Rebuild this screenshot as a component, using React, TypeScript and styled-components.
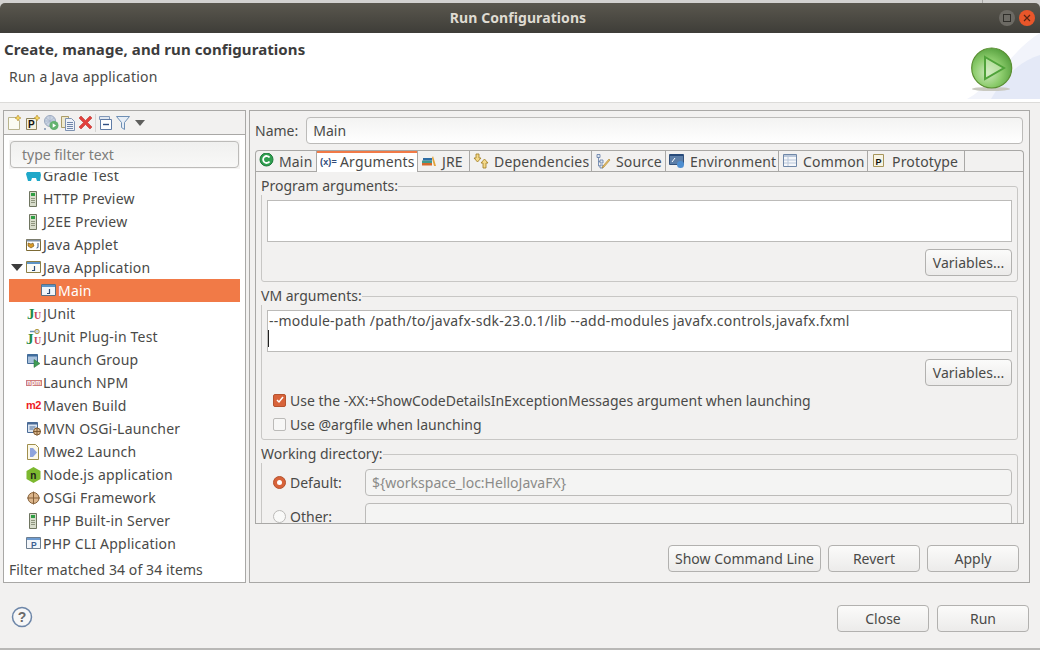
import React from "react";
import styled, { createGlobalStyle } from "styled-components";

const colors = {
  text: "#4a4a48",
  border: "#a9a8a6",
  groupLine: "#c8c7c5",
  field: "#bcbbb9",
  face: "#f2f1f0",
  orange: "#f17a47",
};

const GlobalStyle = createGlobalStyle`
  html, body {
    margin: 0;
    padding: 0;
    background: ${colors.face};
  }
  * {
    box-sizing: border-box;
  }
  body {
    font-family: "Noto Sans", sans-serif;
    font-size: 14px;
    color: ${colors.text};
  }
`;

const Window = styled.div`
  width: 1040px;
  height: 650px;
  display: flex;
  flex-direction: column;
  overflow: hidden;
  background: linear-gradient(#d3d2d0 8px, ${colors.face} 8px);
  border-bottom: 2px solid #b9b8b6;
`;

const TopEdge = styled.div`
  flex: 0 0 3px;
  background: linear-gradient(
    90deg,
    #d3d2d0 982px,
    #a8a7a5 982px,
    #a8a7a5 983px,
    #d3d2d0 983px
  );
`;

const TitleBar = styled.div`
  position: relative;
  flex: 0 0 30px;
  display: flex;
  align-items: center;
  justify-content: center;
  padding: 0 4px 2px 0;
  border-radius: 5px 5px 0 0;
  background: linear-gradient(#5a574e, #3e3d38);
  color: #dfdbd2;
  font-size: 14px;
  font-weight: 700;
  letter-spacing: 0.08px;
`;

const WindowButtons = styled.div`
  position: absolute;
  right: 5px;
  top: 7px;
  display: flex;
  gap: 4px;
`;

const WindowButton = styled.span<{ $close?: boolean }>`
  width: 16px;
  height: 16px;
  border-radius: 50%;
  display: flex;
  align-items: center;
  justify-content: center;
  background: ${(p) => (p.$close ? "#e9562a" : "#6c6a64")};
`;

const Banner = styled.div`
  flex: 0 0 70px;
  display: flex;
  justify-content: space-between;
  align-items: flex-start;
  background: #fff;
  border-bottom: 1px solid #dcdbd9;
`;

const BannerText = styled.div`
  display: flex;
  flex-direction: column;
`;

const BannerTitle = styled.div`
  margin: 7px 0 0 4px;
  font-size: 15px;
  font-weight: 700;
  line-height: 19px;
  letter-spacing: 0.08px;
  color: #3c3c3c;
`;

const BannerSub = styled.div`
  margin: 8px 0 0 9px;
  font-size: 14px;
  line-height: 19px;
  letter-spacing: 0.2px;
`;

const Body = styled.div`
  flex: 0 0 473px;
  margin-top: 7px;
  display: flex;
  gap: 3px;
  padding: 0 10px 0 3px;
`;

const LeftPanel = styled.div`
  width: 243px;
  display: flex;
  flex-direction: column;
  background: #fff;
  border: 1px solid ${colors.border};
`;

const Toolbar = styled.div`
  flex: 0 0 24px;
  display: flex;
  align-items: center;
  padding-left: 3px;
  gap: 2px;
  background: ${colors.face};
  border-bottom: 1px solid ${colors.border};
`;

const ToolDivider = styled.span`
  width: 1px;
  height: 18px;
  margin-left: -2px;
  background: #d6d5d3;
`;

const DropArrow = styled.span`
  width: 0;
  height: 0;
  margin-left: 1px;
  border-left: 5px solid transparent;
  border-right: 5px solid transparent;
  border-top: 6px solid #5f5f5d;
`;

const FilterWrap = styled.div`
  margin: 5px 5px 3px;
  padding: 1px;
  background: #f5f4f3;
`;

const FilterInput = styled.div`
  height: 27px;
  padding-left: 11px;
  display: flex;
  align-items: center;
  border: 1px solid ${colors.field};
  border-radius: 4px;
  background: linear-gradient(#f0f0ef, #f8f8f7);
  color: #7d7d7b;
`;

const TreeViewport = styled.div`
  flex: 1;
  overflow: hidden;
  padding: 0 5px;
`;

const TreeList = styled.div`
  margin-top: -8px;
  display: flex;
  flex-direction: column;
`;

const TreeRow = styled.div<{ $selected?: boolean; $child?: boolean }>`
  height: 23px;
  display: flex;
  align-items: center;
  gap: 1px;
  padding-left: ${(p) => (p.$child ? "32px" : "17px")};
  line-height: 23px;
  letter-spacing: 0.2px;
  white-space: nowrap;
  background: ${(p) => (p.$selected ? colors.orange : "transparent")};
  color: ${(p) => (p.$selected ? "#fff" : colors.text)};
`;

const Expander = styled.span`
  width: 0;
  height: 0;
  margin: 0 2px 0 -15px;
  border-left: 6px solid transparent;
  border-right: 6px solid transparent;
  border-top: 7px solid #3c3c3c;
`;

const StatusLine = styled.div`
  flex: 0 0 24px;
  padding-left: 5px;
  line-height: 24px;
  letter-spacing: 0.1px;
`;

const RightPanel = styled.div`
  flex: 1;
  display: flex;
  flex-direction: column;
  padding: 6px 5px 0 5px;
  border: 1px solid ${colors.border};
`;

const NameRow = styled.div`
  display: flex;
  align-items: center;
  gap: 8px;
  padding-right: 1px;
`;

const Label = styled.span`
  white-space: nowrap;
`;

const TextField = styled.div<{ $disabled?: boolean; $flush?: boolean }>`
  flex: 1;
  height: 27px;
  display: flex;
  align-items: center;
  padding-left: 6px;
  border: 1px solid ${colors.field};
  border-radius: ${(p) => (p.$flush ? "4px 4px 0 0" : "4px")};
  background: ${(p) =>
    p.$disabled ? "#f4f4f3" : "linear-gradient(#f3f3f2, #fff)"};
  color: ${(p) => (p.$disabled ? "#8b8b89" : colors.text)};
`;

const TabStrip = styled.div`
  margin-top: 6px;
  height: 21px;
  display: flex;
  border: 1px solid ${colors.border};
  border-bottom: none;
  border-radius: 4px 4px 0 0;
`;

const Tab = styled.div<{ $active?: boolean; $width: number; $gap: number }>`
  position: relative;
  width: ${(p) => p.$width}px;
  height: ${(p) => (p.$active ? "21px" : "20px")};
  display: flex;
  align-items: center;
  gap: ${(p) => p.$gap}px;
  padding-left: 3px;
  letter-spacing: 0.16px;
  white-space: nowrap;
  border-right: 1px solid ${colors.border};
  box-shadow: ${(p) => (p.$active ? `inset 0 2px ${colors.orange}` : "none")};
  background: ${(p) => (p.$active ? "#fff" : "transparent")};
`;

const TabPane = styled.div`
  height: 353px;
  overflow: hidden;
  padding: 5px 5px 0;
  display: flex;
  flex-direction: column;
  gap: 5px;
  border: 1px solid ${colors.border};
`;

const Group = styled.fieldset<{ $height: number }>`
  flex: 0 0 ${(p) => p.$height}px;
  margin: 0;
  padding: 5px 5px 0;
  min-width: 0;
  border: 1px solid ${colors.groupLine};
  border-radius: 0 3px 3px 3px;
`;

const GroupLegend = styled.legend`
  margin-left: -6px;
  padding: 0;
  line-height: 18px;
  height: 18px;
`;

const TextBlock = styled.div`
  height: 42px;
  padding: 1px 0 0 1px;
  border: 1px solid ${colors.field};
  background: #fff;
  line-height: 18px;
  letter-spacing: 0.22px;
  white-space: nowrap;
`;

const Caret = styled.div`
  width: 1px;
  height: 17px;
  margin-left: -1px;
  background: #222;
`;

const ButtonRow = styled.div<{ $gap?: number }>`
  display: flex;
  justify-content: flex-end;
  gap: ${(p) => p.$gap ?? 7}px;
`;

const GroupButtons = styled(ButtonRow)`
  margin-top: 7px;
`;

const Button = styled.div<{ $width: number }>`
  width: ${(p) => p.$width}px;
  height: 27px;
  padding-bottom: 1px;
  display: flex;
  align-items: center;
  justify-content: center;
  border: 1px solid #b2b1af;
  border-radius: 4px;
  background: linear-gradient(#fbfbfa, #ecebea);
  white-space: nowrap;
`;

const CheckRow = styled.div`
  height: 24px;
  display: flex;
  align-items: center;
  gap: 4px;
  padding-left: 6px;
  white-space: nowrap;
`;

const CheckList = styled.div`
  margin-top: 2px;
`;

const Check = styled.span<{ $on?: boolean }>`
  width: 13px;
  height: 13px;
  display: flex;
  align-items: center;
  justify-content: center;
  border-radius: 2px;
  border: 1px solid ${(p) => (p.$on ? "#b5532f" : "#bbbab8")};
  background: ${(p) => (p.$on ? "#d8633a" : "#f7f7f6")};
`;

const DirRow = styled.div<{ $top: number }>`
  margin-top: ${(p) => p.$top}px;
  display: flex;
  align-items: center;
  padding-left: 6px;
`;

const Radio = styled.span<{ $on?: boolean }>`
  width: 13px;
  height: 13px;
  margin-right: 4px;
  border-radius: 50%;
  display: flex;
  align-items: center;
  justify-content: center;
  border: 1px solid ${(p) => (p.$on ? "#b5532f" : "#bbbab8")};
  background: ${(p) => (p.$on ? "#d8633a" : "#f9f9f8")};
`;

const RadioDot = styled.span`
  width: 5px;
  height: 5px;
  border-radius: 50%;
  background: #fff;
`;

const DirLabel = styled.span`
  width: 75px;
`;

const PanelButtons = styled(ButtonRow)`
  margin: 21px 5px 0 0;
`;

const Footer = styled.div`
  flex: 1;
  display: flex;
  align-items: flex-start;
  justify-content: space-between;
  padding: 22px 11px 0 11px;
`;

const HelpSlot = styled.div`
  margin-top: 1px;
`;

const IconSvg = styled.svg`
  flex: none;
`;

const Svg: React.FC<{ children: React.ReactNode; w?: number; h?: number }> = ({
  children,
  w = 16,
  h = 16,
}) => (
  <IconSvg width={w} height={h} viewBox={`0 0 ${w} ${h}`}>
    {children}
  </IconSvg>
);

const Star = ({ x, y }: { x: number; y: number }) => (
  <path
    transform={`translate(${x} ${y})`}
    d="M3 0l1 2 2 1-2 1-1 2-1-2-2-1 2-1z"
    fill="#f6d65b"
    stroke="#b08a2e"
    strokeWidth=".6"
  />
);

const NewIcon = () => (
  <Svg>
    <path d="M1.500 2.500h8l3 3v9h-11z" fill="#fbfbf2" stroke="#b9b48e" />
    <Star x={8} y={0} />
  </Svg>
);

const ProtoIcon = () => (
  <Svg>
    <path d="M1.500 3.500h10v11h-10z" fill="#f5f1df" stroke="#8d835d" />
    <text x="3" y="13" fontSize="10" fontWeight="700" fontFamily="Liberation Sans" fill="#111">P</text>
    <Star x={9} y={0} />
  </Svg>
);

const ExportIcon = () => (
  <Svg>
    <circle cx="7" cy="6" r="5.500" fill="#c9d3e2" stroke="#9aa8bf" />
    <path d="M2 6h10M7 1v10M3 3l8 6M11 3l-8 6" stroke="#a5b2c7" strokeWidth=".7" />
    <circle cx="11" cy="10.500" r="4.500" fill="#63b26f" />
    <path d="M9.700 8.300l3.400 2.200-3.400 2.200z" fill="#fff" />
    <circle cx="2" cy="14" r="1" fill="#7f93b2" />
  </Svg>
);

const DuplicateIcon = () => (
  <Svg>
    <path d="M.5 1.500h7v11h-7z" fill="#efe9cf" stroke="#ab9d68" />
    <path d="M4.500 3.500h6l3 3v9h-9z" fill="#eef2f8" stroke="#7f93b2" />
    <path d="M6 7.500h6M6 9.500h6M6 11.500h6M6 13.500h6" stroke="#6f86aa" />
  </Svg>
);

const DeleteIcon = () => (
  <Svg>
    <path
      d="M0 3l2-2 4.500 4.500 4.500-4.500 2 2-4.500 4.500 4.500 4.500-2 2-4.500-4.500-4.500 4.500-2-2 4.500-4.500z"
      fill="#e2403c"
      stroke="#bb3a36"
      strokeWidth=".6"
    />
  </Svg>
);

const CollapseIcon = () => (
  <Svg>
    <path d="M1.500 1.500h10v3h-10z" fill="#dfe6f0" stroke="#8298b8" />
    <path d="M2.500 4.500h11v10h-11z" fill="#fff" stroke="#5f7ba6" />
    <path d="M5 9.500h6" stroke="#2f4f82" strokeWidth="1.400" />
  </Svg>
);

const FilterIcon = () => (
  <Svg>
    <path d="M.5 1.500h13l-5 6v7l-3-2v-5z" fill="#e6edf6" stroke="#6e8fb5" />
  </Svg>
);

const ServerIcon = () => (
  <Svg>
    <path d="M3.500 .5h7v15h-7z" fill="#d7dccb" stroke="#6f7560" />
    <path d="M5 2h4v3H5z" fill="#2f9e44" />
    <path d="M5 7.500h4M5 9.500h4M5 11.500h4" stroke="#8f957f" />
  </Svg>
);

const AppletIcon = () => (
  <Svg>
    <path d="M.5 2.500h14v11H.5z" fill="#fff" stroke="#7c6a35" />
    <path d="M.5 2.500h14v2H.5z" fill="#7d90a8" />
    <path d="M2 6l3 1 2-1 1 3-3 2-3-2z" fill="#d89a2a" stroke="#6d4f14" strokeWidth=".6" />
    <path d="M12 6v4.500l-1.500.5" stroke="#3a5a8a" fill="none" />
  </Svg>
);

const JavaAppIcon = ({ flat }: { flat?: boolean }) => (
  <Svg>
    <path d="M.5 1.500h14v11H.5z" fill={flat ? "#f0f5fa" : "#fbfbf6"} stroke={flat ? "#5c6f82" : "#8b7f47"} />
    <path d="M1 2h13v2H1z" fill="#5c93c6" />
    <path d="M8.500 6v4.500H6" stroke="#2c4b75" fill="none" strokeWidth="1.200" />
  </Svg>
);

const JUnitIcon = () => (
  <Svg>
    <text x="1" y="12.500" fontSize="15" fontWeight="700" fontFamily="Liberation Serif" fill="#1f8a48">J</text>
    <text x="8" y="12.500" fontSize="10" fontWeight="700" fontFamily="Liberation Serif" fill="#c8475b">U</text>
  </Svg>
);

const JUnitPluginIcon = () => (
  <Svg>
    <text x="0" y="14.500" fontSize="15" fontWeight="700" fontFamily="Liberation Serif" fill="#1f8a48">J</text>
    <text x="8" y="14.500" fontSize="10" fontWeight="700" fontFamily="Liberation Serif" fill="#c8475b">U</text>
    <path d="M4 2.500h5" stroke="#6e8fb5" strokeWidth="1.500" />
    <circle cx="11" cy="2.500" r="2.200" fill="#c7d4e6" stroke="#b49a3c" />
  </Svg>
);

const GroupIcon = () => (
  <Svg>
    <path d="M1.500 2.500h10v9h-10z" fill="#a7c0dc" stroke="#476c96" />
    <path d="M1.500 2.500h10v2h-10z" fill="#3f6d9e" />
    <path d="M8 7.500l6 4-6 4z" fill="#3f9c55" stroke="#2a6f3d" strokeWidth=".5" />
  </Svg>
);

const NpmIcon = () => (
  <Svg>
    <rect x="0" y="5" width="16" height="6" fill="#cf7d7d" />
    <text x="1" y="10" fontSize="6.500" fontWeight="700" fontFamily="Liberation Sans" fill="#fff">npm</text>
  </Svg>
);

const M2Icon = () => (
  <Svg>
    <text x="0" y="11" fontSize="11" fontWeight="700" fontFamily="Liberation Sans" fill="#ee1c25" letterSpacing="-.5">m2</text>
  </Svg>
);

const MvnIcon = () => (
  <Svg>
    <path d="M1.500 1.500h10v10h-10z" fill="#dbe5f1" stroke="#4a6b96" />
    <path d="M1.500 1.500h10v2h-10z" fill="#4a6b96" />
    <path d="M3.500 6h6M3.500 8h4" stroke="#4a6b96" />
    <circle cx="11" cy="10.500" r="3.500" fill="#d8b48a" stroke="#7d5a33" />
    <path d="M7 10.500h8M11 6.500v8" stroke="#7d5a33" />
  </Svg>
);

const MweIcon = () => (
  <Svg>
    <path d="M1.500 .5h8l3 3v12h-11z" fill="#fbf8ea" stroke="#a08f4c" />
    <path d="M4 4h3l4 4.500-4 4.500H4z" fill="#8ea3dc" />
  </Svg>
);

const NodeIcon = () => (
  <Svg>
    <path d="M7.500 0l7 4v8l-7 4-7-4V4z" fill="#7cb82f" />
    <text x="4.300" y="11.500" fontSize="10" fontWeight="700" fontFamily="Liberation Sans" fill="#1c1c1c">n</text>
  </Svg>
);

const OsgiIcon = () => (
  <Svg>
    <circle cx="7.500" cy="8" r="5.500" fill="#dcb68c" stroke="#86613a" />
    <path d="M1 8h13M7.500 1.500v13" stroke="#86613a" />
  </Svg>
);

const PhpIcon = () => (
  <Svg>
    <path d="M.5 1.500h14v11H.5z" fill="#f3f6fa" stroke="#6c7d8f" />
    <path d="M1 2h13v2H1z" fill="#6d9bd0" />
    <text x="5" y="11.500" fontSize="8.500" fontWeight="700" fontFamily="Liberation Sans" fill="#3b5f92">P</text>
  </Svg>
);

const GradleIcon = () => (
  <Svg>
    <path d="M0 6c1-3 5-5 9-4l3-1 2 2 1 4-1 6h-3l-1-3H6l-1 3H2z" fill="#1fa8c9" />
  </Svg>
);

const MainTabIcon = () => (
  <Svg>
    <circle cx="7.500" cy="6.500" r="6.500" fill="#2f9e4f" stroke="#1e7a3a" />
    <path d="M10.500 4.500a3.500 3.500 0 1 0 0 4" fill="none" stroke="#fff" strokeWidth="1.800" />
  </Svg>
);

const ArgsTabIcon = () => (
  <Svg w={17}>
    <text x="0" y="11" fontSize="9" fontWeight="700" fontFamily="Liberation Sans" fill="#2e4a78">(x)=</text>
  </Svg>
);

const JreTabIcon = () => (
  <Svg>
    <path d="M1 10h10v2.500H1z" fill="#d4682c" />
    <path d="M1 7.500h10V10H1z" fill="#3f9a8c" />
    <path d="M2 5h9v2.500H2z" fill="#2e6da4" />
    <path d="M12 3l3 10h-2l-2-8z" fill="#e2a33a" />
  </Svg>
);

const DepsTabIcon = () => (
  <Svg>
    <path d="M3 1h3v4h2L4.500 9 1 5h2z" fill="#f4d98a" stroke="#a07c20" strokeWidth=".8" />
    <path d="M10 15h3v-5h2l-3.500-4L8 10h2z" fill="#f4d98a" stroke="#a07c20" strokeWidth=".8" />
  </Svg>
);

const SourceTabIcon = () => (
  <Svg>
    <path d="M2 1.500h3v3H2zM5 7h3v3H5zM5 12h3v3H5z" fill="#dfe7f1" stroke="#5f7ba6" strokeWidth=".8" />
    <path d="M3.500 4.500V13H5M3.500 8.500H5" stroke="#5f7ba6" fill="none" strokeWidth=".8" />
    <path d="M15 7l-6 7-2 1 1-2 6-7z" fill="#e9c06a" stroke="#a67f2a" strokeWidth=".6" />
  </Svg>
);

const EnvTabIcon = () => (
  <Svg>
    <path d="M.5 1.500h14v10H.5z" fill="#5c7ea8" stroke="#33527c" />
    <path d="M1 1h13v2H1z" fill="#274a7a" />
    <path d="M3 9l3-4" stroke="#fff" />
    <circle cx="11.500" cy="11.500" r="3.500" fill="#4e8ed0" />
  </Svg>
);

const CommonTabIcon = () => (
  <Svg>
    <path d="M1.500 1.500h13v12h-13z" fill="#f5f7fa" stroke="#7088a8" />
    <path d="M2 2h12v2H2z" fill="#b9c7da" />
    <path d="M2 7h12M2 10h12M6 4v9" stroke="#b9c7da" />
  </Svg>
);

const ProtoTabIcon = () => (
  <Svg>
    <path d="M2.500 1.500h10v12h-10z" fill="#f7f4e4" stroke="#a8965a" />
    <text x="4.500" y="11.500" fontSize="9" fontWeight="700" fontFamily="Liberation Sans" fill="#111">P</text>
  </Svg>
);

const HelpIcon = () => (
  <Svg w={22} h={22}>
    <circle cx="11" cy="11" r="9.500" fill="#f7f7f7" stroke="#6d86a8" strokeWidth="1.500" />
    <text x="11" y="16" textAnchor="middle" fontSize="14" fontWeight="700" fontFamily="Liberation Sans" fill="#6b6b6b">?</text>
  </Svg>
);

const RunBanner = () => (
  <Svg w={75} h={66}>
    <defs>
      <radialGradient id="ball" cx="40%" cy="62%" r="70%">
        <stop offset="0" stopColor="#cfe9bf" />
        <stop offset=".5" stopColor="#8ccc6c" />
        <stop offset="1" stopColor="#4f9a38" />
      </radialGradient>
    </defs>
    <path d="M2 66C28 52 50 14 75 0v66z" fill="#f2f4fb" />
    <path d="M26 66C38 44 55 28 75 22v44z" fill="#e4e9f7" />
    <ellipse cx="26" cy="56" rx="19" ry="2" fill="#c9c9c0" />
    <circle cx="26.700" cy="35" r="20" fill="url(#ball)" stroke="#5b8f33" strokeWidth="1.200" />
    <path d="M20 24l19 11-19 11z" fill="#d8f0c8" fillOpacity=".5" stroke="#4fa23a" strokeWidth="2" />
  </Svg>
);

const treeItems: { label: string; icon: React.ReactNode }[] = [
  { label: "Gradle Test", icon: <GradleIcon /> },
  { label: "HTTP Preview", icon: <ServerIcon /> },
  { label: "J2EE Preview", icon: <ServerIcon /> },
  { label: "Java Applet", icon: <AppletIcon /> },
];

const treeItemsAfter: { label: string; icon: React.ReactNode }[] = [
  { label: "JUnit", icon: <JUnitIcon /> },
  { label: "JUnit Plug-in Test", icon: <JUnitPluginIcon /> },
  { label: "Launch Group", icon: <GroupIcon /> },
  { label: "Launch NPM", icon: <NpmIcon /> },
  { label: "Maven Build", icon: <M2Icon /> },
  { label: "MVN OSGi-Launcher", icon: <MvnIcon /> },
  { label: "Mwe2 Launch", icon: <MweIcon /> },
  { label: "Node.js application", icon: <NodeIcon /> },
  { label: "OSGi Framework", icon: <OsgiIcon /> },
  { label: "PHP Built-in Server", icon: <ServerIcon /> },
  { label: "PHP CLI Application", icon: <PhpIcon /> },
];

const tabs = [
  { label: "Main", width: 61, gap: 4, icon: <MainTabIcon /> },
  { label: "Arguments", width: 101, gap: 3, icon: <ArgsTabIcon />, active: true },
  { label: "JRE", width: 52, gap: 5, icon: <JreTabIcon /> },
  { label: "Dependencies", width: 122, gap: 5, icon: <DepsTabIcon /> },
  { label: "Source", width: 74, gap: 5, icon: <SourceTabIcon /> },
  { label: "Environment", width: 113, gap: 5, icon: <EnvTabIcon /> },
  { label: "Common", width: 89, gap: 5, icon: <CommonTabIcon /> },
  { label: "Prototype", width: 97, gap: 5, icon: <ProtoTabIcon /> },
];

const App: React.FC = () => (
  <Window>
    <GlobalStyle />
    <TopEdge />
    <TitleBar>
      Run Configurations
      <WindowButtons>
        <WindowButton>
          <Svg w={8} h={8}>
            <rect x=".5" y=".5" width="7" height="7" fill="none" stroke="#2f2e2a" />
          </Svg>
        </WindowButton>
        <WindowButton $close>
          <Svg w={8} h={8}>
            <path d="M1 1l6 6M7 1L1 7" stroke="#5a2412" strokeWidth="1.200" />
          </Svg>
        </WindowButton>
      </WindowButtons>
    </TitleBar>

    <Banner>
      <BannerText>
        <BannerTitle>Create, manage, and run configurations</BannerTitle>
        <BannerSub>Run a Java application</BannerSub>
      </BannerText>
      <RunBanner />
    </Banner>

    <Body>
      <LeftPanel>
        <Toolbar>
          <NewIcon />
          <ProtoIcon />
          <ExportIcon />
          <DuplicateIcon />
          <DeleteIcon />
          <ToolDivider />
          <CollapseIcon />
          <FilterIcon />
          <DropArrow />
        </Toolbar>
        <FilterWrap>
          <FilterInput>type filter text</FilterInput>
        </FilterWrap>
        <TreeViewport>
          <TreeList>
            {treeItems.map((item) => (
              <TreeRow key={item.label}>
                {item.icon}
                {item.label}
              </TreeRow>
            ))}
            <TreeRow>
              <Expander />
              <JavaAppIcon />
              Java Application
            </TreeRow>
            <TreeRow $child $selected>
              <JavaAppIcon flat />
              Main
            </TreeRow>
            {treeItemsAfter.map((item) => (
              <TreeRow key={item.label}>
                {item.icon}
                {item.label}
              </TreeRow>
            ))}
          </TreeList>
        </TreeViewport>
        <StatusLine>Filter matched 34 of 34 items</StatusLine>
      </LeftPanel>

      <RightPanel>
        <NameRow>
          <Label>Name:</Label>
          <TextField>Main</TextField>
        </NameRow>
        <TabStrip>
          {tabs.map((tab) => (
            <Tab key={tab.label} $active={tab.active} $width={tab.width} $gap={tab.gap}>
              {tab.icon}
              {tab.label}
            </Tab>
          ))}
        </TabStrip>
        <TabPane>
          <Group $height={105}>
            <GroupLegend>Program arguments:</GroupLegend>
            <TextBlock />
            <GroupButtons>
              <Button $width={87}>Variables...</Button>
            </GroupButtons>
          </Group>
          <Group $height={153}>
            <GroupLegend>VM arguments:</GroupLegend>
            <TextBlock>
              --module-path /path/to/javafx-sdk-23.0.1/lib --add-modules javafx.controls,javafx.fxml
              <Caret />
            </TextBlock>
            <GroupButtons>
              <Button $width={87}>Variables...</Button>
            </GroupButtons>
            <CheckList>
              <CheckRow>
                <Check $on>
                  <Svg w={10} h={10}>
                    <path d="M2 5l2 2 4-5" fill="none" stroke="#fff" strokeWidth="1.500" />
                  </Svg>
                </Check>
                Use the -XX:+ShowCodeDetailsInExceptionMessages argument when launching
              </CheckRow>
              <CheckRow>
                <Check />
                Use @argfile when launching
              </CheckRow>
            </CheckList>
          </Group>
          <Group $height={120}>
            <GroupLegend>Working directory:</GroupLegend>
            <DirRow $top={1}>
              <Radio $on>
                <RadioDot />
              </Radio>
              <DirLabel>Default:</DirLabel>
              <TextField $disabled>{"${workspace_loc:HelloJavaFX}"}</TextField>
            </DirRow>
            <DirRow $top={7}>
              <Radio />
              <DirLabel>Other:</DirLabel>
              <TextField $disabled $flush />
            </DirRow>
          </Group>
        </TabPane>
        <PanelButtons>
          <Button $width={153}>Show Command Line</Button>
          <Button $width={92}>Revert</Button>
          <Button $width={92}>Apply</Button>
        </PanelButtons>
      </RightPanel>
    </Body>

    <Footer>
      <HelpSlot>
        <HelpIcon />
      </HelpSlot>
      <ButtonRow $gap={8}>
        <Button $width={92}>Close</Button>
        <Button $width={92}>Run</Button>
      </ButtonRow>
    </Footer>
  </Window>
);

export default App;
